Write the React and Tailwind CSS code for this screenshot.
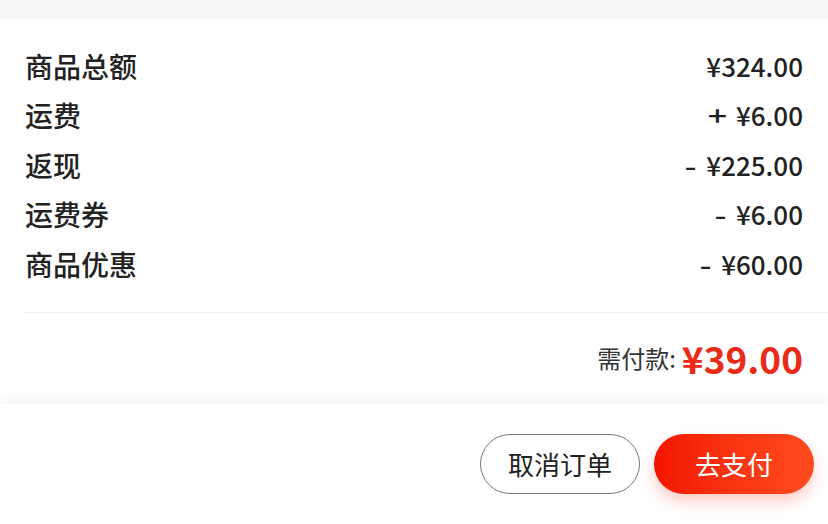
export default function App() {
  const rows = [
    ["商品总额", "", "¥324.00"],
    ["运费", "+", "¥6.00"],
    ["返现", "-", "¥225.00"],
    ["运费券", "-", "¥6.00"],
    ["商品优惠", "-", "¥60.00"],
  ];
  const font = { fontFamily: '"Noto Sans CJK SC", "Noto Sans", sans-serif' };
  return (
    <div className="w-[828px] h-[524px] bg-white overflow-hidden flex flex-col text-[#222]" style={font}>
      <div className="h-[19px] bg-[#f7f6f8] shrink-0" />
      <div className="pt-[22px] px-[25px]">
        {rows.map(([k, s, v]) => (
          <div key={k} className="flex justify-between items-center h-[49.5px] font-medium leading-none">
            <span className="text-[28px]">{k}</span>
            <span className="text-[26px] flex items-center">
              {s && <span className="inline-block scale-x-130 mr-[11px]">{s}</span>}
              <span>{v}</span>
            </span>
          </div>
        ))}
      </div>
      <div className="ml-[24px] mt-[23px] h-px bg-[#f0f0f0]" />
      <div className="flex justify-end items-center h-[91px] pr-[25px]">
        <span className="text-[24px] text-[#333] mr-[6px]">需付款:</span>
        <span className="text-[37px] font-bold text-[#eb2a18] leading-none">¥39.00</span>
      </div>
      <div className="flex-1 bg-white shadow-[0_-6px_10px_rgba(0,0,0,0.04)] flex justify-end items-start pt-[30px] pr-[14px] gap-[14px]">
        <button className="w-[160px] h-[60px] rounded-full border border-[#777] text-[26px] text-[#222] bg-white">取消订单</button>
        <button className="w-[160px] h-[60px] rounded-full bg-gradient-to-r from-[#f41200] to-[#ff4a1e] text-white text-[26px] shadow-[0_8px_14px_rgba(255,60,40,0.25)]">去支付</button>
      </div>
    </div>
  );
}
